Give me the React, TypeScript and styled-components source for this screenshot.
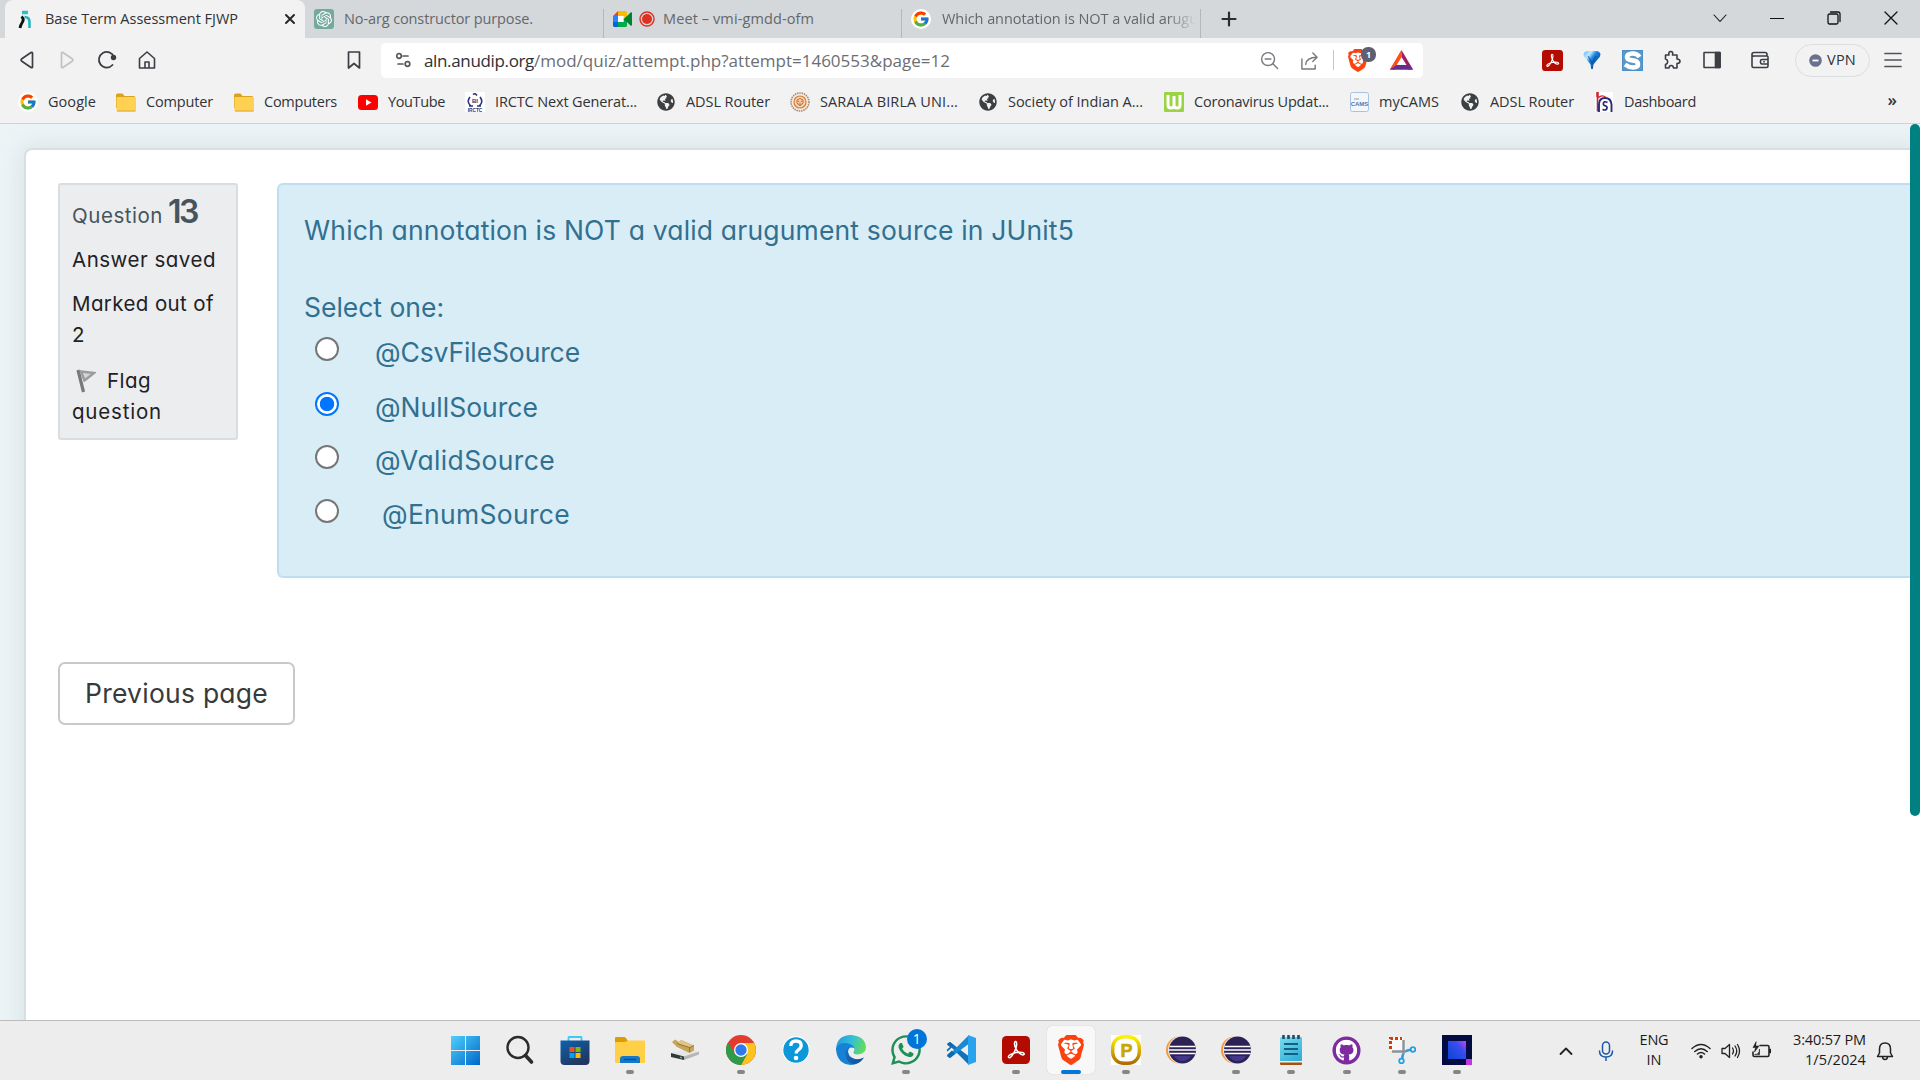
import React, { useLayoutEffect, useRef, useState } from "react";
import styled, { createGlobalStyle, css } from "styled-components";
import { FcGoogle } from "react-icons/fc";
import { SiBrave, SiOpenai } from "react-icons/si";
import { FaWhatsapp, FaGithub, FaGlobeAmericas } from "react-icons/fa";

const UI = '"Open Sans", "Noto Sans", sans-serif';
const BODY = 'Inter, "Open Sans", sans-serif';

const Global = createGlobalStyle`
  * { box-sizing: border-box; }
  html, body { margin: 0; padding: 0; }
  body { width: 1920px; height: 1080px; overflow: hidden; background: #fff; }
  svg { display: block; }
`;

/* ---------- text that tracks itself to a known width ---------- */
const Tracked = styled.span`
  display: inline-block;
  white-space: pre;
`;

function Fit({ w, children }: { w: number; children: string }) {
  const ref = useRef<HTMLSpanElement>(null);
  const [spacing, setSpacing] = useState(0);
  useLayoutEffect(() => {
    const el = ref.current;
    if (el) setSpacing((w - el.getBoundingClientRect().width) / children.length);
  }, [w, children]);
  return (
    <Tracked ref={ref} style={{ letterSpacing: `${spacing}px` }}>
      {children}
    </Tracked>
  );
}

/* ---------- window ---------- */
const Window = styled.div`
  display: flex;
  flex-direction: column;
  width: 1920px;
  height: 1080px;
  overflow: hidden;
  font-family: ${UI};
  color: #303338;
`;

/* ---------- tab strip ---------- */
const TabStrip = styled.div`
  display: flex;
  height: 38px;
  padding-left: 5px;
  background: #d4d8db;
`;

const Tab = styled.div<{ $w: number; $active?: boolean; $line?: boolean }>`
  display: flex;
  align-items: center;
  width: ${(p) => p.$w}px;
  height: 38px;
  padding-bottom: 1px;
  font-size: 14.5px;
  color: #64676b;
  overflow: hidden;
  ${(p) =>
    p.$active &&
    css`
      background: #f2f2f2;
      color: #2f3236;
      border-radius: 8px 8px 0 0;
    `}
  ${(p) =>
    p.$line &&
    css`
      background: linear-gradient(#b5b8bb, #b5b8bb) right 9px / 1px 29px no-repeat;
    `}
`;

const TabIcon = styled.div<{ $left: number; $gap: number }>`
  display: flex;
  flex: none;
  margin-left: ${(p) => p.$left}px;
  margin-right: ${(p) => p.$gap}px;
`;

const TabTitle = styled.div`
  padding-bottom: 1px;
`;

const Faded = styled(TabTitle)`
  width: 255px;
  overflow: hidden;
  mask-image: linear-gradient(90deg, #000 225px, transparent 254px);
`;

const TabClose = styled.div`
  margin-left: auto;
  margin-right: 9px;
`;

const NewTab = styled.div`
  display: flex;
  align-items: center;
  width: 56px;
  padding-bottom: 1px;
  justify-content: center;
`;

const WindowButtons = styled.div`
  display: flex;
  align-items: center;
  margin-left: auto;
  padding: 0 1px 2px 0;
`;

const WinButton = styled.div`
  display: flex;
  justify-content: center;
  width: 57px;
`;

/* ---------- toolbar ---------- */
const Toolbar = styled.div`
  display: flex;
  align-items: center;
  height: 44px;
  padding-left: 7px;
  background: #f2f2f2;
`;

const Slot = styled.div<{ $w?: number; $ml?: number }>`
  display: flex;
  flex: none;
  align-items: center;
  justify-content: center;
  width: ${(p) => p.$w ?? 40}px;
  margin-left: ${(p) => p.$ml ?? 0}px;
`;

const AddressBar = styled.div`
  display: flex;
  align-items: center;
  width: 1042px;
  height: 35px;
  margin-left: 7px;
  padding: 0 2px;
  border-radius: 5px;
  background: #fff;
  font-size: 17px;
  color: #6b6e73;
`;

const Host = styled.span`
  margin-left: 1px;
  color: #2d3035;
`;

const Divider = styled.div`
  width: 1px;
  height: 20px;
  margin: 0 4px;
  background: #c6c8ca;
`;

const ShieldWrap = styled.div`
  position: relative;
`;

const ShieldCount = styled.div`
  position: absolute;
  left: 13px;
  top: -2px;
  width: 15px;
  height: 15px;
  border-radius: 7px;
  background: #5d6072;
  color: #fff;
  font: 700 9px/15px ${UI};
  text-align: center;
`;

const VpnPill = styled.div`
  display: flex;
  align-items: center;
  justify-content: center;
  gap: 5px;
  width: 75px;
  height: 33px;
  margin-left: 15px;
  border: 1px solid #dcdddf;
  border-radius: 17px;
  font-size: 14.5px;
`;

const VpnLabel = styled.span`
  padding-bottom: 2px;
`;

/* ---------- bookmarks ---------- */
const BookmarkBar = styled.div`
  display: flex;
  align-items: center;
  height: 42px;
  padding: 0 0 1px 17px;
  border-bottom: 1px solid #cfd1d3;
  background: #f2f2f2;
  font-size: 14.5px;
`;

const Bookmark = styled.div<{ $w: number }>`
  display: grid;
  grid-template-columns: 22px auto;
  justify-content: start;
  column-gap: 9px;
  align-items: center;
  justify-items: center;
  width: ${(p) => p.$w}px;
  flex: none;
`;

const BookmarkLabel = styled.span`
  padding-bottom: 2px;
`;

const Overflow = styled.div`
  margin-left: auto;
  margin-right: 23px;
  padding-bottom: 5px;
  font-size: 17px;
  font-weight: 600;
`;

/* ---------- page ---------- */
const Page = styled.main`
  position: relative;
  display: flex;
  height: 896px;
  padding: 24px 0 0 24px;
  overflow: hidden;
  background: #ecf4f6;
  font-family: ${BODY};
  font-feature-settings: "cv11";
`;

const Card = styled.section`
  flex: 1;
  height: 920px;
  padding: 33px 0 0 32px;
  border: 2px solid #d8dfe2;
  border-right: 0;
  border-radius: 8px 0 0 0;
  background: #fff;
  box-shadow: 0 0 26px rgba(150, 170, 180, 0.28);
`;

const QuestionRow = styled.div`
  display: flex;
  align-items: flex-start;
  gap: 39px;
`;

const Info = styled.aside`
  flex: none;
  width: 180px;
  height: 257px;
  padding: 6px 0 0 12px;
  border: 2px solid #dadde0;
  border-radius: 3px;
  background: #ecedef;
  color: #1f2124;
  font-size: 20.5px;
  line-height: 31px;
`;

const InfoHeading = styled.div`
  display: flex;
  align-items: baseline;
  gap: 5px;
  height: 46px;
  line-height: 41px;
  color: #46545d;
`;

const Number13 = styled.strong`
  font-size: 32px;
  font-weight: 600;
`;

const InfoLine = styled.div<{ $gap: number }>`
  margin-top: ${(p) => p.$gap}px;
`;

const FlagRow = styled.div`
  display: flex;
  align-items: center;
  gap: 11px;
  padding-left: 4px;
`;

const Prompt = styled.div`
  flex: 1;
  height: 395px;
  padding: 26px 0 0 25px;
  border: 2px solid #bce0f1;
  border-right: 0;
  border-radius: 6px 0 0 6px;
  background: #d9edf7;
  color: #31708f;
  font-size: 26.5px;
  line-height: 38px;
`;

const SelectOne = styled.div`
  margin-top: 39px;
`;

const Options = styled.div`
  display: grid;
  grid-template-rows: 55px 53px 54px 54px;
  margin-top: 7px;
`;

const Option = styled.label<{ $indent?: number }>`
  display: flex;
  align-items: flex-start;
  padding-left: 11px;
  gap: ${(p) => 36 + (p.$indent ?? 0)}px;
`;

const Radio = styled.span<{ $on?: boolean }>`
  display: block;
  flex: none;
  width: 24px;
  height: 24px;
  margin-top: 4px;
  border: 2px solid ${(p) => (p.$on ? "#0075ff" : "#767676")};
  border-radius: 50%;
  background: ${(p) =>
    p.$on ? "radial-gradient(circle, #0075ff 6.8px, #fff 7.6px)" : "#fff"};
`;

const PrevButton = styled.button`
  display: block;
  width: 237px;
  height: 63px;
  margin: 84px 0 0;
  padding: 0 0 2px 25px;
  border: 2px solid #c9c9c9;
  border-radius: 7px;
  background: #fff;
  color: #373a3c;
  font: 400 26.5px/38px ${BODY};
  font-feature-settings: "cv11";
  text-align: left;
`;

const Scrollbar = styled.div`
  position: absolute;
  top: 0;
  right: 0;
  width: 10px;
  height: 692px;
  border-radius: 5px;
  background: #008080;
`;

/* ---------- taskbar ---------- */
const Taskbar = styled.footer`
  display: flex;
  height: 60px;
  padding-left: 437px;
  border-top: 1px solid #bcbcbc;
  background: #ededed;
`;

const AppButton = styled.div<{ $active?: boolean }>`
  display: flex;
  flex-direction: column;
  align-items: center;
  flex: none;
  width: 48px;
  height: 48px;
  margin: 5px 3.55px 0;
  padding-top: 9px;
  border-radius: 5px;
  ${(p) => p.$active && css`
    background: #f8f8f8;
    box-shadow: 0 0 1px rgba(0, 0, 0, 0.25);
  `}
`;

const Glyph = styled.div`
  position: relative;
  display: flex;
  align-items: center;
  justify-content: center;
  width: 30px;
  height: 30px;
  margin-left: 1px;
`;

const Running = styled.div<{ $active?: boolean }>`
  width: ${(p) => (p.$active ? 20 : 8)}px;
  height: 4px;
  margin: 5px 0 0 1px;
  border-radius: 2px;
  background: ${(p) => (p.$active ? "#0078d7" : "#868686")};
`;

const Unread = styled.div`
  position: absolute;
  left: 16px;
  top: -6px;
  width: 20px;
  height: 20px;
  border-radius: 50%;
  background: #0074d9;
  color: #fff;
  font: 400 14px/20px ${UI};
  text-align: center;
`;

const Tray = styled.div`
  display: flex;
  align-items: center;
  margin-left: auto;
  padding-right: 20px;
  font-size: 14.5px;
  line-height: 20px;
  color: #1b1b1b;
`;

const TrayText = styled.div<{ $w: number; $align: "center" | "right" }>`
  display: flex;
  flex-direction: column;
  align-items: ${(p) => (p.$align === "center" ? "center" : "flex-end")};
  width: ${(p) => p.$w}px;
  padding-bottom: 1px;
`;

/* ---------- icons ---------- */
type Stroke = { s?: number; c?: string; w?: number; vb?: number; children: React.ReactNode };
const Line = ({ s = 20, c = "#3b3e44", w = 1.6, vb = 20, children }: Stroke) => (
  <svg width={s} height={s} viewBox={`0 0 ${vb} ${vb}`} fill="none" stroke={c} strokeWidth={w} strokeLinecap="round" strokeLinejoin="round">
    {children}
  </svg>
);

const GoogleBadge = () => (
  <svg width="20" height="20" viewBox="0 0 20 20">
    <circle cx="10" cy="10" r="10" fill="#fff" />
    <FcGoogle x="1" y="1" size={18} />
  </svg>
);

const Anudip = () => (
  <svg width="14" height="20" viewBox="0 0 14 20">
    <path d="M4 3.500h6" stroke="#2cc0c4" strokeWidth="3.600" />
    <path d="M3.500 7.500Q6.500 10 4.500 13T2 19" stroke="#111" strokeWidth="2.800" fill="none" />
    <path d="M6.500 8Q11.500 8 11.500 13v6" stroke="#23b5bd" strokeWidth="2.600" fill="none" />
  </svg>
);

const ChatGpt = () => (
  <svg width="20" height="20" viewBox="0 0 20 20">
    <rect width="20" height="20" rx="3" fill="#74aa9c" />
    <SiOpenai x="2" y="2" size={16} color="#fff" />
  </svg>
);

const Meet = () => (
  <svg width="19" height="16" viewBox="0 0 19 16">
    <path d="M0 5h5v6H0z" fill="#2684fc" />
    <path d="M5 0v5H0z" fill="#ea4335" />
    <path d="M0 11h5v5H1.500Q0 16 0 14.500z" fill="#0066da" />
    <path d="M5 0h7.500Q14 0 14 1.500V8l-3.500-3H5z" fill="#ffba00" />
    <path d="M5 11h5.500V8H14v6.500Q14 16 12.500 16H5z" fill="#00ac47" />
    <path d="M5 5h5.500v6H5z" fill="#fff" />
    <path d="M10.500 8 14 5l3.500-3.500Q19 1 19 2v12q0 1-1.500.500L14 11z" fill="#00832d" />
  </svg>
);

const Folder = () => (
  <svg width="20" height="19" viewBox="0 0 20 19">
    <path d="M0 2Q0 .500 1.500.500h5L8.500 3H18q1 0 1 1v11H0z" fill="#d9a31c" />
    <path d="M.500 5q0-1 1-1H19q1 0 1 1v12q0 1.500-1.500 1.500H2Q.500 18.500.500 17z" fill="#ffd152" />
    <path d="M1 18h18.500" stroke="#dcaa31" />
  </svg>
);

const YouTube = () => (
  <svg width="20" height="15" viewBox="0 0 20 15">
    <rect width="20" height="15" rx="3.500" fill="#f00" />
    <path d="M8 4.200v6.600l5.500-3.300z" fill="#fff" />
  </svg>
);

const Irctc = () => (
  <svg width="20" height="20" viewBox="0 0 20 20">
    <rect width="20" height="20" fill="#fff" />
    <g fill="none" stroke="#28337f" strokeWidth="1.600">
      <path d="M6 14Q1 10 5 5M14 14q5-4 1-9M8 2.500q2-2 4 1M4 14h4M12 14h4" />
    </g>
    <text x="10" y="11" fontSize="6" fontWeight="700" textAnchor="middle" fill="#28337f" fontFamily="Liberation Sans">BI</text>
    <text x="10" y="19.500" fontSize="4.800" fontWeight="700" textAnchor="middle" fill="#28337f" fontFamily="Liberation Sans">IRCTC</text>
  </svg>
);

const Globe = () => <FaGlobeAmericas size={18} color="#3c4043" />;

const Sarala = () => (
  <svg width="20" height="20" viewBox="0 0 20 20">
    <circle cx="10" cy="10" r="9" fill="#f4eadf" stroke="#a98a78" strokeWidth="1.600" strokeDasharray="1.500 .800" />
    <circle cx="10" cy="10" r="6" fill="#f5d9b9" stroke="#d77b36" strokeWidth="1.200" />
    <path d="M7 8q3-3 6 0v3q-3 5-6 0zM8 9l1.500 1M12 9l-1.500 1M8.500 12h3" fill="none" stroke="#c1642a" />
  </svg>
);

const Worldo = () => (
  <svg width="20" height="20" viewBox="0 0 20 20">
    <rect width="20" height="20" rx="1" fill="#9bd344" />
    <path d="M4 3v10q0 3 3 3t3-3V4v9q0 3 3 3t3-3V3" fill="none" stroke="#fff" strokeWidth="3" />
  </svg>
);

const Cams = () => (
  <svg width="19" height="20" viewBox="0 0 19 20">
    <rect x=".500" y=".500" width="18" height="19" rx="2" fill="#f3f7fc" stroke="#a7c2e2" />
    <path d="M4 7h5" stroke="#9a9a9a" />
    <text x="9.500" y="13.500" fontSize="6" fontWeight="700" textAnchor="middle" fill="#5572b8" fontFamily="Liberation Sans">CAMS</text>
  </svg>
);

const Dash = () => (
  <svg width="18" height="20" viewBox="0 0 18 20">
    <rect width="18" height="20" fill="#fff" />
    <path d="M2.500 0v5" stroke="#d9232e" strokeWidth="2.600" />
    <path d="M2.500 5v14.500" stroke="#b02a4a" strokeWidth="1.600" />
    <path d="M3 6q4-4 8-.500" stroke="#d9232e" strokeWidth="1.300" fill="none" />
    <path d="M4 20v-7.500Q4 6 10 6t6.500 6.500V20" stroke="#2b2a74" strokeWidth="1.900" fill="none" />
    <path d="M12.500 10.500Q8.500 8.500 8.300 12q0 1.500 2 1.800 2 .700 1.700 2.200-.500 3-4.500 1.500" stroke="#2b2a74" strokeWidth="1.700" fill="none" />
  </svg>
);

const Acrobat = ({ s }: { s: number }) => (
  <svg width={s} height={s} viewBox="0 0 28 28">
    <rect width="28" height="28" rx="4.500" fill="#b30b00" />
    <path
      d="M13.400 5.600c-1.300 0-1.200 3.400.2 6.400 1.500 3.400 4.800 6.900 7.300 6.900 1.900 0 1.800-2.100-.5-2.500-3.200-.5-7.500.2-10.200 1.300-2.700 1-4.300 2.700-3.600 3.700 1 1.300 3.300-1 5.200-4.400 1.700-3.200 2.900-6.700 2.900-9.100 0-1.500-.5-2.300-1.300-2.300z"
      fill="none"
      stroke="#fff"
      strokeWidth="1.500"
      strokeLinejoin="round"
    />
  </svg>
);

const Pin = () => (
  <svg width="18" height="20" viewBox="0 0 18 20">
    <defs>
      <linearGradient id="pin" x1="0" y1="0" x2="1" y2=".8">
        <stop offset="0" stopColor="#5fb4ff" />
        <stop offset=".3" stopColor="#c4e9ff" />
        <stop offset=".5" stopColor="#1787e8" />
        <stop offset="1" stopColor="#06346c" />
      </linearGradient>
    </defs>
    <path d="M.500 4.500Q1 1 5 1h8q4 0 4.500 3.500 0 2-3 5l-4 5L9.800 19H8.200l-.7-4.500-4-5q-3-3-3-5z" fill="url(#pin)" />
    <path d="m5 6 4 7 4-7" fill="none" stroke="#0d3f7d" strokeWidth="1.200" opacity=".6" />
  </svg>
);

const SBadge = () => (
  <svg width="21" height="21" viewBox="0 0 21 21">
    <rect x=".500" y=".500" width="20" height="20" fill="#5b98c8" stroke="#4a8ec9" />
    <path d="M17.500 7Q15 3.200 10 3.500 5 4 5 7.200q0 2.500 5.500 3.200t5.500 3.800q0 3-5 3.300-4 0-8-3" fill="none" stroke="#fff" strokeWidth="4.600" />
  </svg>
);

const Bat = () => (
  <svg width="23" height="20" viewBox="0 0 23 20">
    <path d="M11.500 0 0 19.500h5L11.500 8z" fill="#ff4f1f" />
    <path d="M11.500 0 23 19.500h-5L11.500 8z" fill="#9e1f63" />
    <path d="M3 15h17l3 4.800H0z" fill="#662d91" />
    <path d="m11.500 7-5 8h10z" fill="#fff" />
    <path d="M11.500 0 0 19.500l6.500-4.500 5-8z" fill="#ff4f1f" />
  </svg>
);

const WinLogo = () => (
  <svg width="29" height="29" viewBox="0 0 29 29">
    <defs>
      <linearGradient id="win" x1="0" y1="0" x2="1" y2="1">
        <stop offset="0" stopColor="#4fd0fb" />
        <stop offset="1" stopColor="#0067c9" />
      </linearGradient>
    </defs>
    <path d="M0 0h14v14H0zM15 0h14v14H15zM0 15h14v14H0zM15 15h14v14H15z" fill="url(#win)" />
  </svg>
);

const Store = () => (
  <svg width="30" height="30" viewBox="0 0 30 30">
    <defs>
      <linearGradient id="store" x1="0" y1="0" x2=".6" y2="1">
        <stop offset="0" stopColor="#0c63ae" />
        <stop offset="1" stopColor="#22365f" />
      </linearGradient>
    </defs>
    <path d="M8.500 7V2.500Q8.500 2 9 2h12q.500 0 .500.500V7" fill="none" stroke="#3ccbf4" strokeWidth="1.800" />
    <path d="M.500 5.500h29V26q0 4-4 4h-21q-4 0-4-4z" fill="url(#store)" />
    <path d="M9.500 12h5v5h-5z" fill="#f25022" />
    <path d="M15.500 12h5v5h-5z" fill="#7fba00" />
    <path d="M9.500 18h5v5h-5z" fill="#00a4ef" />
    <path d="M15.500 18h5v5h-5z" fill="#ffb900" />
  </svg>
);

const Explorer = () => (
  <svg width="30" height="28" viewBox="0 0 30 28">
    <path d="M0 2Q0 1 1 1h8q1 0 2 1l2 3h16v6H0z" fill="#dd9b05" />
    <path d="M0 7q0-1 1-1h9l3-1.500h16q1 0 1 1V26q0 1-1 1H1q-1 0-1-1z" fill="#ffcf45" />
    <path d="M5 27v-4q0-3 3-3h14q3 0 3 3v4z" fill="#1479cc" />
    <path d="M9 23.500h12" stroke="#0a4a8f" strokeWidth="1.300" />
  </svg>
);

const Drive = () => (
  <svg width="28" height="22" viewBox="0 0 28 22">
    <path d="m0 14 15-4 13 3-15 5z" fill="#e4e6e8" />
    <path d="m0 14 13 3.500V21L0 18z" fill="#35383b" />
    <path d="m13 17.500 15-5v3L13 21z" fill="#b3b6ba" />
    <path d="m9 18.300 2 .600" stroke="#4ad35a" strokeWidth="1.500" />
    <path d="m1 3 3-2.500L8 3l2-2 13 5.500v5L18.500 14 6 8z" fill="#c9a55a" />
    <path d="m10 1.500 13 5-4.500 2L6 4.500z" fill="#e0c585" />
    <path d="m6 4.500 12.500 4 4.500-2M18.500 8.500V13" stroke="#80642a" fill="none" strokeWidth=".800" />
  </svg>
);

const Chrome = () => (
  <svg width="30" height="30" viewBox="0 0 30 30">
    <circle cx="15" cy="15" r="15" fill="#e33b2e" />
    <path d="M15 8h13.200A15 15 0 0 1 15 30l6.300-11.500z" fill="#fcc31e" />
    <path d="m8.800 18.800-6.800-11.300A15 15 0 0 0 15 30l6.200-11z" fill="#2d9b47" />
    <circle cx="15" cy="15" r="7" fill="#fff" />
    <circle cx="15" cy="15" r="5.700" fill="#3079ed" />
  </svg>
);

const Help = () => (
  <svg width="28" height="28" viewBox="0 0 28 28">
    <circle cx="14" cy="14" r="13.300" fill="#0b97d8" stroke="#fff" strokeWidth="1.200" />
    <path d="M8.800 10q0-5 5.200-5t5.200 4.600q0 2.400-2.800 4.200-2.200 1.400-2.200 3.700" fill="none" stroke="#fff" strokeWidth="3.300" />
    <circle cx="14" cy="22" r="2.300" fill="#fff" />
  </svg>
);

const Edge = () => (
  <svg width="30" height="30" viewBox="0 0 30 30">
    <defs>
      <linearGradient id="edgeTop" x1="0" y1="0.300" x2="1" y2=".5">
        <stop offset="0" stopColor="#2599dc" />
        <stop offset=".5" stopColor="#31bfd8" />
        <stop offset="1" stopColor="#67dd55" />
      </linearGradient>
      <linearGradient id="edgeLow" x1="0" y1="0" x2="1" y2="1">
        <stop offset="0" stopColor="#1477d2" />
        <stop offset="1" stopColor="#124a8c" />
      </linearGradient>
    </defs>
    <path d="M0 14Q1 0 15 0q14 1 15 12 0 7-8 7.500-5 0-4.500-2.500 1.500-2 .500-4Q14 8 8 9.500 2 11 0 16z" fill="url(#edgeTop)" />
    <path d="M0 14q2-6 8-6 8 0 10.500 5Q12 11 12 17q1 7 9 7.500 4 0 6.500-2Q23 30 15 30 1 29 0 14z" fill="#1682d6" />
    <path d="M13 12q-4 3-3.500 8 1.500 9 9 9 6-1 9.500-6.500-4 2.500-9 1.500-7-2-7-7 0-3 1-5z" fill="url(#edgeLow)" />
  </svg>
);

const VsCode = () => (
  <svg width="30" height="30" viewBox="0 0 30 30">
    <path d="M1.500 8.500 4 7l18.500 14v8.500z" fill="#1272b8" />
    <path d="M1.500 21.500 4 23 22.500 9V.500z" fill="#168bd3" />
    <path d="M1.500 8.500 4 7l4 3.200-6.500 6.300q-1.500-1 0-2.500l2.500-2-2.500-2q-1-1 0-1.500zM1.500 21.500q-1-1 0-2L6 15.500l3 3.500-5 4z" fill="#0f69ad" />
    <path d="M22 0 30 3v24l-8 3z" fill="#2aa3ee" />
  </svg>
);

const Processing = () => (
  <svg width="30" height="30" viewBox="0 0 30 30">
    <defs>
      <linearGradient id="proc" x1="0" y1="0" x2="0" y2="1">
        <stop offset="0" stopColor="#fff200" />
        <stop offset="1" stopColor="#b26c00" />
      </linearGradient>
    </defs>
    <rect width="30" height="30" fill="#fff" />
    <rect x="1.700" y="1.700" width="26.600" height="26.600" rx="11" fill="#fff" stroke="url(#proc)" strokeWidth="3.400" />
    <text x="15.500" y="21.500" fontSize="18" fontWeight="700" textAnchor="middle" fill="#c8a800" stroke="#c8a800" strokeWidth=".6" fontFamily="Liberation Sans">P</text>
  </svg>
);

const Eclipse = () => (
  <svg width="30" height="28" viewBox="0 0 30 28">
    <circle cx="13.500" cy="14" r="13.500" fill="#f8973a" />
    <circle cx="16" cy="14" r="14" fill="#ededed" />
    <circle cx="16.500" cy="14" r="13.500" fill="#2c2255" />
    <path d="M8 20h17q-3 5-8.500 5T8 20z" fill="#44378a" />
    <path d="M3.500 10.500h26M3 14h27M3.500 17.500h26" stroke="#fff" strokeWidth="1.700" />
  </svg>
);

const Notepad = () => (
  <svg width="22" height="30" viewBox="0 0 22 30">
    <defs>
      <linearGradient id="note" x1="0" y1="0" x2=".6" y2="1">
        <stop offset="0" stopColor="#7cdcf0" />
        <stop offset="1" stopColor="#35b1d8" />
      </linearGradient>
    </defs>
    <path d="M0 24h22v5q0 1-1 1H1q-1 0-1-1z" fill="#a5520f" />
    <path d="M0 26h22v1.500H0z" fill="#f2f2f2" />
    <path d="M0 3q0-1 1-1h20q1 0 1 1v23H0z" fill="url(#note)" />
    <path d="M4 9h14M4 14h14M4 19h14" stroke="#12607f" strokeWidth="1.800" />
    <path d="M3.500 0v4M8.500 0v4M13.500 0v4M18.500 0v4" stroke="#174f6d" strokeWidth="2.600" />
  </svg>
);

const GitHubDesktop = () => (
  <svg width="29" height="29" viewBox="0 0 29 29">
    <circle cx="14.500" cy="14.500" r="14" fill="#7d2b9e" />
    <FaGithub x="3.500" y="3.500" size={22} color="#fff" />
  </svg>
);

const Snip = () => (
  <svg width="28" height="28" viewBox="0 0 28 28">
    <path d="M1 1h14v14H1z" fill="#f8f8f8" />
    <path d="M2.500 13V2.500H14" fill="none" stroke="#d83b01" strokeWidth="3" strokeDasharray="3 2" />
    <path d="M15.500 4v13L14 23M4 15.500h13l5-2" fill="none" stroke="#8b9298" strokeWidth="2.400" />
    <path d="m15 18-1 4M18 15l5-1.500" stroke="#279ee2" strokeWidth="2" />
    <circle cx="13.500" cy="25" r="2.300" fill="none" stroke="#279ee2" strokeWidth="1.800" />
    <circle cx="25" cy="13.500" r="2.300" fill="none" stroke="#279ee2" strokeWidth="1.800" />
  </svg>
);

const Square = () => (
  <svg width="30" height="30" viewBox="0 0 30 30">
    <defs>
      <linearGradient id="sq" x1="0.100" y1=".8" x2="1" y2="0">
        <stop offset="0" stopColor="#1347d8" />
        <stop offset=".6" stopColor="#3a4cf0" />
        <stop offset="1" stopColor="#d040e8" />
      </linearGradient>
    </defs>
    <rect width="30" height="30" fill="#020b42" />
    <rect x="6" y="6" width="18" height="18" fill="url(#sq)" />
    <rect x="24" y="24" width="6" height="6" fill="#c234e2" />
  </svg>
);

const BraveLogo = ({ w, h }: { w: number; h: number }) => (
  <svg width={w} height={h} viewBox="1.800 0 20.400 24" preserveAspectRatio="none">
    <path d="M6 4h12l2 4-3 10-5 4-5-4L4 8z" fill="#fff" />
    <SiBrave x="0" y="0" size={24} color="#fb4310" />
  </svg>
);

const FlagIcon = () => (
  <svg width="20" height="24" viewBox="0 0 20 24">
    <path d="m2 1 5.500 22" stroke="#77797b" strokeWidth="3.200" fill="none" />
    <path d="M5 2.500 18 4l-9.500 7.500z" stroke="#9a9c9e" strokeWidth="2.400" fill="#d4d5d6" />
  </svg>
);

/* ---------- data ---------- */
const bookmarks = [
  { label: "Google", w: 48, cell: 98, icon: <GoogleBadge /> },
  { label: "Computer", w: 67, cell: 118, icon: <Folder /> },
  { label: "Computers", w: 73, cell: 124, icon: <Folder /> },
  { label: "YouTube", w: 57, cell: 107, icon: <YouTube /> },
  { label: "IRCTC Next Generat...", w: 142, cell: 191, icon: <Irctc /> },
  { label: "ADSL Router", w: 84, cell: 134, icon: <Globe /> },
  { label: "SARALA BIRLA UNI...", w: 138, cell: 188, icon: <Sarala /> },
  { label: "Society of Indian A...", w: 135, cell: 186, icon: <Globe /> },
  { label: "Coronavirus Updat...", w: 135, cell: 185, icon: <Worldo /> },
  { label: "myCAMS", w: 60, cell: 111, icon: <Cams /> },
  { label: "ADSL Router", w: 84, cell: 134, icon: <Globe /> },
  { label: "Dashboard", w: 72, cell: 110, icon: <Dash /> },
];

const apps: { icon: React.ReactNode; run?: boolean; active?: boolean; unread?: string }[] = [
  { icon: <WinLogo /> },
  { icon: <Line s={30} vb={30} w={2.4} c="#2b2b2b"><circle cx="13" cy="12.500" r="10.500" /><path d="m20.500 20.500 6 6.500" strokeWidth="3.600" /></Line> },
  { icon: <Store /> },
  { icon: <Explorer />, run: true },
  { icon: <Drive /> },
  { icon: <Chrome />, run: true },
  { icon: <Help /> },
  { icon: <Edge /> },
  { icon: <FaWhatsapp size={34} color="#1d8f57" />, run: true, unread: "1" },
  { icon: <VsCode /> },
  { icon: <Acrobat s={28} />, run: true },
  { icon: <BraveLogo w={26} h={30} />, run: true, active: true },
  { icon: <Processing />, run: true },
  { icon: <Eclipse /> },
  { icon: <Eclipse />, run: true },
  { icon: <Notepad />, run: true },
  { icon: <GitHubDesktop />, run: true },
  { icon: <Snip />, run: true },
  { icon: <Square />, run: true },
];

const options = [
  { label: "@CsvFileSource", w: 205 },
  { label: "@NullSource", w: 163, on: true },
  { label: "@ValidSource", w: 181 },
  { label: "@EnumSource", w: 188, indent: 7 },
];

export default function App() {
  return (
    <Window>
      <Global />
      <TabStrip>
        <Tab $w={300} $active>
          <TabIcon $left={13} $gap={13}><Anudip /></TabIcon>
          <TabTitle><Fit w={193}>Base Term Assessment FJWP</Fit></TabTitle>
          <TabClose><Line s={12} vb={12} w={2} c="#25282c"><path d="m2 2 8 8M10 2l-8 8" /></Line></TabClose>
        </Tab>
        <Tab $w={299} $line>
          <TabIcon $left={9} $gap={10}><ChatGpt /></TabIcon>
          <TabTitle><Fit w={189}>No-arg constructor purpose.</Fit></TabTitle>
        </Tab>
        <Tab $w={298} $line>
          <TabIcon $left={9} $gap={7}><Meet /></TabIcon>
          <TabIcon $left={0} $gap={8}>
            <svg width="16" height="16" viewBox="0 0 16 16">
              <circle cx="8" cy="8" r="7" fill="none" stroke="#e0301e" strokeWidth="1.400" />
              <circle cx="8" cy="8" r="5" fill="#e0301e" />
            </svg>
          </TabIcon>
          <TabTitle><Fit w={151}>Meet – vmi-gmdd-ofm</Fit></TabTitle>
        </Tab>
        <Tab $w={299} $line>
          <TabIcon $left={9} $gap={11}><GoogleBadge /></TabIcon>
          <Faded><Fit w={256}>Which annotation is NOT a valid arugu</Fit></Faded>
        </Tab>
        <NewTab><Line s={16} vb={16} w={2.2} c="#2a2d31"><path d="M8 1.500v13M1.500 8h13" /></Line></NewTab>
        <WindowButtons>
          <WinButton><Line s={14} vb={14} w={1.1} c="#111"><path d="m1 4 6 6.500L13 4" /></Line></WinButton>
          <WinButton><Line s={14} vb={14} w={1.2} c="#111"><path d="M.500 7.500h13" /></Line></WinButton>
          <WinButton><Line s={14} vb={14} w={1.3} c="#111"><rect x="1" y="3" width="10" height="10" rx="1.500" /><path d="M3.500 1H11q2 0 2 2v7.500" /></Line></WinButton>
          <WinButton><Line s={14} vb={14} w={1.3} c="#111"><path d="m1 1 12 12M13 1 1 13" /></Line></WinButton>
        </WindowButtons>
      </TabStrip>

      <Toolbar>
        <Slot><Line w={1.7}><path d="M15.500 3v14Q15 18 14 17.500L4.500 11q-1-1 0-2L14 2.500q1.200-.500 1.500.500z" /></Line></Slot>
        <Slot><Line w={1.7} c="#c0c2c5"><path d="M4.500 3v14Q5 18 6 17.500l9.500-6.500q1-1 0-2L6 2.500Q4.800 2 4.500 3z" /></Line></Slot>
        <Slot><Line w={1.8}><path d="M15.500 15A7.800 7.800 0 1 1 17 7" /><circle cx="16.500" cy="7.500" r="1.800" fill="#3b3e44" /></Line></Slot>
        <Slot><Line w={1.6}><path d="M2.500 8.500 10 2l7.500 6.500V18h-15zM8 18v-6h4v6" /></Line></Slot>
        <Slot $ml={167}><Line w={1.7}><path d="M4.500 2h11v16L10 13.500 4.500 18z" /></Line></Slot>
        <AddressBar>
          <Slot>
            <Line s={18} vb={18} w={1.7} c="#55585d"><circle cx="5" cy="5" r="2.300" /><path d="M9 5h5M4 13h5" /><circle cx="13.500" cy="13" r="2.300" /></Line>
          </Slot>
          <Host><Fit w={110}>aln.anudip.org</Fit></Host>
          <Fit w={416}>/mod/quiz/attempt.php?attempt=1460553&page=12</Fit>
          <Slot $ml={299}><Line s={19} vb={20} w={1.5} c="#777a7f"><circle cx="8.500" cy="8.500" r="6.800" /><path d="m13.500 13.500 5 5M5.500 8.500h6" /></Line></Slot>
          <Slot><Line s={19} vb={20} w={1.5} c="#777a7f"><path d="M2 8.500V19h14v-4M6 14q1-7.500 11.500-7.500M13.500 2 18 6.500 13.500 11" /></Line></Slot>
          <Divider />
          <Slot>
            <ShieldWrap><BraveLogo w={20} h={23} /><ShieldCount>1</ShieldCount></ShieldWrap>
          </Slot>
          <Slot $ml={3}><Bat /></Slot>
        </AddressBar>
        <Slot $ml={109}><Acrobat s={21} /></Slot>
        <Slot><Pin /></Slot>
        <Slot><SBadge /></Slot>
        <Slot><Line w={1.6}><path d="M3.500 5H7q-.8-3.500 1.800-3.500T10.500 5H15v4q3 .200 3 2.200T15 13.500V18h-3.500q-.300-2.500-2.300-2.500T7 18H3.500v-3.500q2.200-.800 2.200-2.800T3.500 9z" /></Line></Slot>
        <Slot><Line w={1.6}><rect x="2" y="2.500" width="16" height="15" rx=".500" /><path d="M13.500 2.500H18v15h-4.500z" fill="#3b3e44" /></Line></Slot>
        <Slot $ml={8}><Line w={1.6}><path d="M17 6V4.500Q17 2.500 15 2.500H4Q2 2.500 2 4.500T4 6h13q1 0 1 1v9q0 1.500-1.500 1.500h-13Q2 17.500 2 16V4.500M18 9.500h-6q-1.500 0-1.500 1.500v1.500q0 1.500 1.500 1.500h6" /><path d="M14 11.500v.500" /></Line></Slot>
        <VpnPill>
          <svg width="13" height="13" viewBox="0 0 13 13"><circle cx="6.500" cy="6.500" r="6.300" fill="#6b6f90" /><path d="M3.500 6.500h6" stroke="#fff" strokeWidth="1.800" /></svg>
          <VpnLabel><Fit w={29}>VPN</Fit></VpnLabel>
        </VpnPill>
        <Slot $ml={3}><Line s={18} vb={18} w={1.7} c="#505358"><path d="M1 2.500h16M1 9h16M1 15.500h16" /></Line></Slot>
      </Toolbar>

      <BookmarkBar>
        {bookmarks.map((b, i) => (
          <Bookmark key={i} $w={b.cell}>
            {b.icon}
            <BookmarkLabel><Fit w={b.w}>{b.label}</Fit></BookmarkLabel>
          </Bookmark>
        ))}
        <Overflow>»</Overflow>
      </BookmarkBar>

      <Page>
        <Card>
          <QuestionRow>
            <Info>
              <InfoHeading>
                <Fit w={91}>Question</Fit>
                <Number13><Fit w={29}>13</Fit></Number13>
              </InfoHeading>
              <InfoLine $gap={7}><Fit w={144}>Answer saved</Fit></InfoLine>
              <InfoLine $gap={13}><Fit w={142}>Marked out of</Fit></InfoLine>
              <InfoLine $gap={0}>2</InfoLine>
              <InfoLine $gap={15}><FlagRow><FlagIcon /><Fit w={44}>Flag</Fit></FlagRow></InfoLine>
              <InfoLine $gap={0}><Fit w={90}>question</Fit></InfoLine>
            </Info>
            <Prompt>
              <Fit w={770}>Which annotation is NOT a valid arugument source in JUnit5</Fit>
              <SelectOne><Fit w={140}>Select one:</Fit></SelectOne>
              <Options>
                {options.map((o) => (
                  <Option key={o.label} $indent={o.indent}>
                    <Radio $on={o.on} />
                    <Fit w={o.w}>{o.label}</Fit>
                  </Option>
                ))}
              </Options>
            </Prompt>
          </QuestionRow>
          <PrevButton><Fit w={183}>Previous page</Fit></PrevButton>
        </Card>
        <Scrollbar />
      </Page>

      <Taskbar>
        {apps.map((a, i) => (
          <AppButton key={i} $active={a.active}>
            <Glyph>
              {a.icon}
              {a.unread && <Unread>{a.unread}</Unread>}
            </Glyph>
            {a.run && <Running $active={a.active} />}
          </AppButton>
        ))}
        <Tray>
          <Slot><Line s={14} vb={14} w={1.8} c="#222"><path d="m1.500 10 5.500-5.500 5.500 5.500" /></Line></Slot>
          <Slot><Line s={20} w={1.5} c="#1c5aa8"><rect x="6.500" y="1" width="7" height="12" rx="3.500" /><path d="M3.500 10q0 6 6.500 6t6.500-6M10 16v3.500" /></Line></Slot>
          <TrayText $w={56} $align="center"><Fit w={29}>ENG</Fit><Fit w={15}>IN</Fit></TrayText>
          <Slot $w={38}><Line s={20} w={1.5} c="#222"><path d="M1 7.500q9-8 18 0M3.800 10.500q6.200-5.500 12.400 0M6.500 13q3.500-3 7 0" /><circle cx="10" cy="15.800" r="1" fill="#222" /></Line></Slot>
          <Slot $w={22}><Line s={20} w={1.3} c="#222"><path d="M1 7.500h3L8.500 3.500v13L4 12.500H1zM11.500 7q2 3 0 6M14 5q3.500 5 0 10M16.500 3.500q4 6.500 0 13" /></Line></Slot>
          <Slot $w={38}><Line s={20} w={1.6} c="#222"><path d="M9 4.500h7.500Q18 4.500 18 6v8q0 1.500-1.500 1.500h-13Q2 15.500 2 14v-3M19.500 8.500v3" /><path d="M5 1 2 6.500h2.500L3.500 11l4.500-6H5z" fill="#222" strokeWidth=".600" /><path d="M4 13.500q4.500 0 4.500-5.500v5.500z" fill="#222" strokeWidth=".600" /></Line></Slot>
          <TrayText $w={86} $align="right"><Fit w={73}>3:40:57 PM</Fit><Fit w={61}>1/5/2024</Fit></TrayText>
          <Slot $w={30} $ml={4}><Line s={20} w={1.5} c="#222"><path d="M2.500 15.500 4.500 12V8q0-6 5.500-6t5.500 6v4l2 3.500zM7.500 15.500q0 3 2.500 3t2.500-3" /></Line></Slot>
        </Tray>
      </Taskbar>
    </Window>
  );
}
